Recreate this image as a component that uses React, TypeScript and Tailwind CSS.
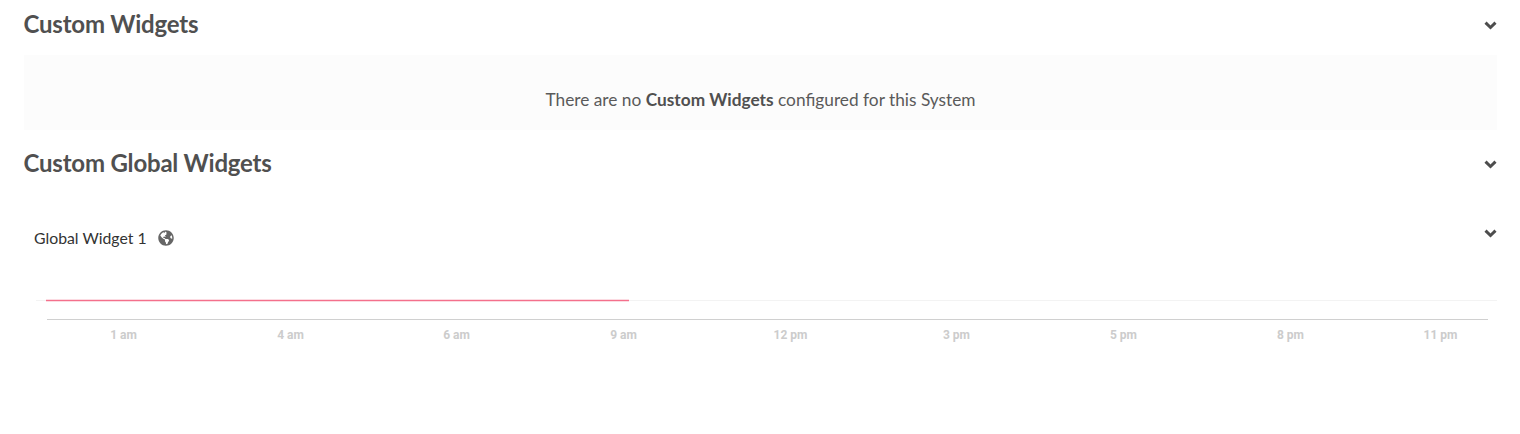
import { FaGlobeAmericas } from "react-icons/fa";

const hours = [
  { label: "1 am", x: 123.5 },
  { label: "4 am", x: 290.5 },
  { label: "6 am", x: 456.5 },
  { label: "9 am", x: 623.5 },
  { label: "12 pm", x: 790.5 },
  { label: "3 pm", x: 956.5 },
  { label: "5 pm", x: 1123.5 },
  { label: "8 pm", x: 1290.5 },
  { label: "11 pm", x: 1440.5 },
];

function Chevron() {
  return (
    <svg width="13" height="9" viewBox="0 0 13 9" className="shrink-0 text-[#4d4d4d]">
      <polyline points="1.5,1.7 6.5,6.5 11.5,1.7" fill="none" stroke="currentColor" strokeWidth="3" />
    </svg>
  );
}

function SectionHeader({ title }: { title: string }) {
  return (
    <div className="flex items-center justify-between h-[30px]">
      <h2 className="text-[24px] leading-[30px] font-bold tracking-[-0.2px] text-[#505050] -mt-[1px] -ml-[0.5px]">{title}</h2>
      <div className="mt-[2px]">
        <Chevron />
      </div>
    </div>
  );
}

export default function App() {
  return (
    <div className="w-[1520px] h-[434px] overflow-hidden bg-white font-['Lato',sans-serif]">
      <div className="pl-[24px] pr-[23px] pt-[9px]">
        <SectionHeader title="Custom Widgets" />
        <div className="mt-[16px] h-[75px] bg-[#fcfcfc] flex items-center justify-center pt-[14px] text-[17.3px] text-[#5a5a5a]">
          <p>
            There are no <b className="font-bold text-[#505050]">Custom Widgets</b> configured for this System
          </p>
        </div>
        <div className="mt-[18px]">
          <SectionHeader title="Custom Global Widgets" />
        </div>
        <div className="mt-[50px] flex items-start justify-between">
          <div className="flex items-center gap-[11px] pl-[10px] text-[15.8px] leading-[20px] text-[#333333]">
            <span>Global Widget 1</span>
            <FaGlobeAmericas className="w-[16px] h-[16px] text-[#666666]" />
          </div>
          <div className="mt-[1px]">
            <Chevron />
          </div>
        </div>
      </div>
      {/* chart */}
      <svg width="1520" height="100" viewBox="0 260 1520 100" className="block mt-[12px]">
        <line x1="36" y1="300.5" x2="1497" y2="300.5" stroke="#f3f3f3" />
        <line x1="46" y1="300.5" x2="629" y2="300.5" stroke="#f4708c" strokeWidth="1.5" />
        <line x1="47" y1="319.5" x2="1488" y2="319.5" stroke="#d0d0d0" />
        {hours.map((h) => (
          <text
            key={h.label}
            x={h.x}
            y="339"
            textAnchor="middle"
            fontFamily="Roboto, sans-serif"
            fontWeight="700"
            fontSize="12"
            fill="#cccccc"
          >
            {h.label}
          </text>
        ))}
      </svg>
    </div>
  );
}
